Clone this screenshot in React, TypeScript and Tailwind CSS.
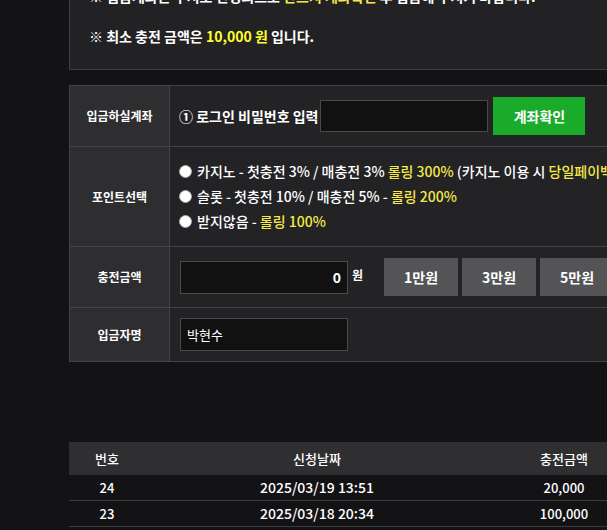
import type { ReactNode } from "react";

const font = { fontFamily: '"Noto Sans CJK KR", "Noto Sans", sans-serif' };

type Row = { no: number; date: string; amount: string };

const history: Row[] = [
  { no: 24, date: "2025/03/19 13:51", amount: "20,000" },
  { no: 23, date: "2025/03/18 20:34", amount: "100,000" },
  { no: 22, date: "2025/03/17 18:02", amount: "50,000" },
];

function FormRow({
  label,
  children,
  className = "",
}: {
  label: string;
  children: ReactNode;
  className?: string;
}) {
  return (
    <div className="flex border-b border-[#444446] last:border-b-0">
      <div className="flex w-[100px] shrink-0 items-center justify-center border-r border-[#444446] bg-[#2e2e30] text-[12px] font-bold text-white">
        {label}
      </div>
      <div className={`flex flex-1 items-center bg-[#232325] pl-[9px] ${className}`}>
        {children}
      </div>
    </div>
  );
}

function Radio({ children }: { children: ReactNode }) {
  return (
    <label className="flex items-center gap-[5px] whitespace-nowrap leading-[25px]">
      <span className="h-[13px] w-[13px] shrink-0 rounded-full border border-[#aaa] bg-white" />
      <span>{children}</span>
    </label>
  );
}

const Y = ({ children }: { children: ReactNode }) => (
  <span className="text-[#f4e94a]">{children}</span>
);

export default function App() {
  return (
    <div className="min-h-screen w-full overflow-hidden bg-[#131214]" style={font}>
      <div className="ml-[69px] w-[1000px] pb-10">
        {/* notice box */}
        <div className="-mt-[35px] border border-[#3e3e40] bg-[#222224] px-[19px] pb-[23px] pt-[20px] text-[14px] font-bold leading-[20px] text-white">
          <p>
            ※ 입금계좌는 수시로 변경되므로 <Y>반드시 계좌확인</Y> 후 입금해 주시기 바랍니다.
          </p>
          <p>&nbsp;</p>
          <p>
            ※ 최소 충전 금액은 <span className="text-[#ffff2a]">10,000 원</span> 입니다.
          </p>
        </div>

        {/* charge form */}
        <div className="mt-[15px] border border-[#444446] text-white">
          <FormRow label="입금하실계좌" className="py-[11px]">
            <span className="text-[14px] font-bold">① 로그인 비밀번호 입력</span>
            <input
              type="password"
              className="ml-[2px] h-[32px] w-[168px] border border-[#4a4a4c] bg-[#111112] px-2 text-[13px] text-white outline-none"
            />
            <button className="ml-[5px] h-[38px] w-[92px] bg-[#1aab2a] text-[14px] font-bold text-white">
              계좌확인
            </button>
          </FormRow>

          <FormRow label="포인트선택" className="py-[12px] text-[14px] font-medium">
            <div className="flex flex-col">
              <Radio>
                카지노 - 첫충전 3% / 매충전 3% <Y>롤링 300%</Y> (카지노 이용 시 <Y>당일페이백 5%</Y>)
              </Radio>
              <Radio>
                슬롯 - 첫충전 10% / 매충전 5% - <Y>롤링 200%</Y>
              </Radio>
              <Radio>
                받지않음 - <Y>롤링 100%</Y>
              </Radio>
            </div>
          </FormRow>

          <FormRow label="충전금액" className="py-[11px]">
            <input
              readOnly
              value="0"
              className="ml-px h-[33px] w-[168px] border border-[#4a4a4c] bg-[#111112] px-[6px] text-right text-[14px] font-bold text-white outline-none"
            />
            <span className="ml-[4px] self-start pt-[8px] text-[12px] font-bold">원</span>
            <div className="ml-[21px] flex gap-[4px]">
              {["1만원", "3만원", "5만원", "10만원", "50만원", "100만원", "정정"].map((t) => (
                <button
                  key={t}
                  className="h-[38px] w-[74px] bg-[#545456] text-[14px] font-bold text-white"
                >
                  {t}
                </button>
              ))}
            </div>
          </FormRow>

          <FormRow label="입금자명" className="py-[10px]">
            <input
              readOnly
              value="박현수"
              className="ml-px h-[33px] w-[168px] border border-[#4a4a4c] bg-[#111112] px-[6px] text-[13px] text-white outline-none"
            />
          </FormRow>
        </div>

        {/* charge history */}
        <div className="mt-[80px] text-[13px] text-white">
          <div className="flex h-[33px] items-center bg-[#2f2f31] font-medium">
            <div className="w-[76px] text-center">번호</div>
            <div className="w-[344px] text-center">신청날짜</div>
            <div className="w-[150px] text-center">충전금액</div>
            <div className="flex-1 text-center">상태</div>
          </div>
          {history.map((r) => (
            <div key={r.no} className="flex h-[26px] items-center border-b border-[#3c3c3e] font-medium">
              <div className="w-[76px] text-center">{r.no}</div>
              <div className="w-[344px] text-center text-[14px]">{r.date}</div>
              <div className="w-[150px] text-center">{r.amount}</div>
              <div className="flex-1 text-center">완료</div>
            </div>
          ))}
        </div>
      </div>
    </div>
  );
}
